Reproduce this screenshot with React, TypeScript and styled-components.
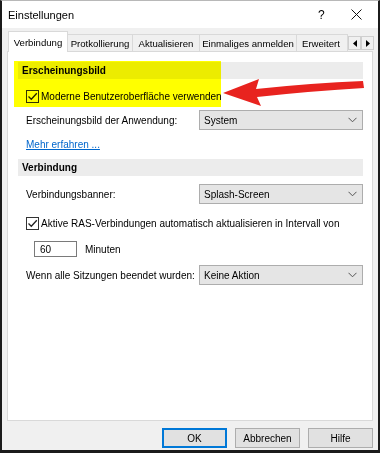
import styled, { createGlobalStyle } from "styled-components";

const GlobalStyle = createGlobalStyle`
  html, body {
    margin: 0;
    padding: 0;
    background: #ffffff;
  }
  * {
    box-sizing: border-box;
  }
`;

function Check() {
  return (
    <svg width="11" height="11" viewBox="0 0 11 11">
      <path d="M1.5 5.5 L4.3 8.3 L9.8 2.2" fill="none" stroke="#222" strokeWidth="1.3" />
    </svg>
  );
}

function Chevron() {
  return (
    <svg width="9" height="6" viewBox="0 0 9 6">
      <path d="M0.5 0.8 L4.5 4.8 L8.5 0.8" fill="none" stroke="#555" strokeWidth="1" />
    </svg>
  );
}

function CheckBox({ label }: { label: string }) {
  return (
    <CheckRow>
      <Box>
        <Check />
      </Box>
      <span>{label}</span>
    </CheckRow>
  );
}

function Select({ value }: { value: string }) {
  return (
    <StyledSelect>
      <span>{value}</span>
      <Chevron />
    </StyledSelect>
  );
}

const tabs = [
  { label: "Verbindung", width: 60 },
  { label: "Protkollierung", width: 66 },
  { label: "Aktualisieren", width: 68 },
  { label: "Einmaliges anmelden", width: 98 },
  { label: "Erweitert", width: 52 },
];

export default function App() {
  return (
    <>
      <GlobalStyle />
      <Window>
        <TitleBar>
          <span className="title">Einstellungen</span>
          <span className="help">?</span>
          <svg className="close" width="11" height="11" viewBox="0 0 11 11">
            <path d="M0.5 0.5 L10.5 10.5 M10.5 0.5 L0.5 10.5" stroke="#111" strokeWidth="1" />
          </svg>
        </TitleBar>

        <Body>
          <TabStrip>
            {tabs.map((t, i) => (
              <Tab key={t.label} $active={i === 0} $width={t.width} $clip={i === tabs.length - 1}>
                {t.label}
              </Tab>
            ))}
            <TabArrows>
              <ArrowBtn>
                <svg width="4" height="7" viewBox="0 0 4 7">
                  <path d="M4 0 L0 3.5 L4 7 Z" fill="#000" />
                </svg>
              </ArrowBtn>
              <ArrowBtn>
                <svg width="4" height="7" viewBox="0 0 4 7">
                  <path d="M0 0 L4 3.5 L0 7 Z" fill="#000" />
                </svg>
              </ArrowBtn>
            </TabArrows>
          </TabStrip>

          <Panel>
            <SectionHeader>Erscheinungsbild</SectionHeader>
            <Rows $top={9}>
              <CheckBox label="Moderne Benutzeroberfläche verwenden" />
            </Rows>
            <FieldRow $top={6}>
              <span>Erscheinungsbild der Anwendung:</span>
              <Select value="System" />
            </FieldRow>
            <Link>Mehr erfahren ...</Link>

            <SectionHeader $top={7}>Verbindung</SectionHeader>
            <FieldRow $top={8}>
              <span>Verbindungsbanner:</span>
              <Select value="Splash-Screen" />
            </FieldRow>
            <Rows $top={11}>
              <CheckBox label="Aktive RAS-Verbindungen automatisch aktualisieren in Intervall von" />
            </Rows>
            <IntervalRow>
              <NumberBox>60</NumberBox>
              <span>Minuten</span>
            </IntervalRow>
            <FieldRow $top={8}>
              <span>Wenn alle Sitzungen beendet wurden:</span>
              <Select value="Keine Aktion" />
            </FieldRow>
          </Panel>

          <Footer>
            <Button $primary>OK</Button>
            <Button>Abbrechen</Button>
            <Button>Hilfe</Button>
          </Footer>
        </Body>

        <Highlight />
        <RedArrow width="155" height="36" viewBox="0 0 155 36">
          <path
            d="M6 19 L42 5 L39 15 Q95 9 146 7 L147 14 Q95 17 40 23 L44 32 Z"
            fill="#e8231f"
          />
        </RedArrow>
      </Window>
    </>
  );
}

const Window = styled.div`
  position: relative;
  width: 380px;
  height: 453px;
  display: flex;
  flex-direction: column;
  border-left: 2px solid #1b1b1b;
  border-right: 2px solid #1b1b1b;
  border-bottom: 3px solid #1b1b1b;
  border-top: 1px solid #b8b8b8;
  font-family: "Liberation Sans", Arial, sans-serif;
  font-size: 10px;
  color: #000;
  overflow: hidden;
`;

const TitleBar = styled.div`
  height: 27px;
  flex: none;
  background: #fff;
  display: flex;
  align-items: center;
  padding: 0 0 0 6px;
  font-size: 11px;

  .title {
    flex: 1;
  }
  .help {
    width: 10px;
    font-size: 12px;
    margin-right: 23px;
  }
  .close {
    margin-right: 16px;
  }
`;

const Body = styled.div`
  flex: 1;
  background: #f0f0f0;
  display: flex;
  flex-direction: column;
  padding: 4px 5px 0 5px;
`;

const TabStrip = styled.div`
  display: flex;
  align-items: flex-end;
  height: 20px;
  margin-left: 1px;
  position: relative;
  z-index: 1;
  margin-bottom: -1px;
`;

const Tab = styled.div<{ $active?: boolean; $width: number; $clip?: boolean }>`
  width: ${(p) => p.$width}px;
  flex: none;
  height: ${(p) => (p.$active ? "21px" : "18px")};
  padding: ${(p) => (p.$clip ? "0 0 0 5px" : "0")};
  display: flex;
  align-items: center;
  justify-content: ${(p) => (p.$clip ? "flex-start" : "center")};
  white-space: nowrap;
  font-size: 9.6px;
  background: ${(p) => (p.$active ? "#fff" : "#f0f0f0")};
  border: 1px solid #d9d9d9;
  border-bottom: ${(p) => (p.$active ? "none" : "1px solid #d9d9d9")};
  margin-left: ${(p) => (p.$active ? "0" : "-1px")};
  overflow: hidden;
`;

const TabArrows = styled.div`
  display: flex;
  align-self: center;
  margin-top: 2px;
`;

const ArrowBtn = styled.div`
  width: 13px;
  height: 14px;
  background: #f0f0f0;
  border: 1px solid #cfcfcf;
  display: flex;
  align-items: center;
  justify-content: center;
`;

const Panel = styled.div`
  height: 370px;
  flex: none;
  background: #fff;
  border: 1px solid #d9d9d9;
  padding: 10px 9px 0 10px;
  display: flex;
  flex-direction: column;
`;

const SectionHeader = styled.div<{ $top?: number }>`
  height: 17px;
  margin-top: ${(p) => p.$top ?? 0}px;
  background: #ececec;
  font-weight: 700;
  padding-left: 4px;
  display: flex;
  align-items: center;
`;

const Rows = styled.div<{ $top?: number }>`
  margin-top: ${(p) => p.$top ?? 0}px;
  padding-left: 8px;
`;

const CheckRow = styled.div`
  display: flex;
  align-items: center;
  gap: 2px;
  height: 16px;
  white-space: nowrap;
`;

const Box = styled.div`
  width: 13px;
  height: 13px;
  border: 1px solid #333;
  background: #fff;
  display: flex;
  align-items: center;
  justify-content: center;
`;

const FieldRow = styled.div<{ $top?: number }>`
  margin-top: ${(p) => p.$top ?? 0}px;
  padding-left: 8px;
  display: grid;
  grid-template-columns: 173px 1fr;
  align-items: center;
  white-space: nowrap;
`;

const StyledSelect = styled.div`
  height: 20px;
  background: #e5e5e5;
  border: 1px solid #adadad;
  display: flex;
  align-items: center;
  justify-content: space-between;
  padding: 0 5px 0 4px;
`;

const Link = styled.div`
  margin-top: 7px;
  padding-left: 8px;
  color: #0066cc;
  text-decoration: underline;
  height: 15px;
  line-height: 15px;
`;

const IntervalRow = styled.div`
  margin-top: 10px;
  padding-left: 16px;
  display: flex;
  align-items: center;
  gap: 8px;
`;

const NumberBox = styled.div`
  width: 43px;
  height: 16px;
  border: 1px solid #7a7a7a;
  padding-left: 5px;
  display: flex;
  align-items: center;
`;

const Footer = styled.div`
  display: flex;
  justify-content: flex-end;
  gap: 8px;
  padding-top: 7px;
`;

const Button = styled.div<{ $primary?: boolean }>`
  width: 65px;
  height: 20px;
  background: #e1e1e1;
  border: ${(p) => (p.$primary ? "2px solid #0078d7" : "1px solid #adadad")};
  display: flex;
  align-items: center;
  justify-content: center;
`;

const Highlight = styled.div`
  position: absolute;
  left: 12px;
  top: 60px;
  width: 207px;
  height: 46px;
  background: #ffff00;
  mix-blend-mode: multiply;
  pointer-events: none;
`;

const RedArrow = styled.svg`
  position: absolute;
  left: 215px;
  top: 73px;
  pointer-events: none;
`;
